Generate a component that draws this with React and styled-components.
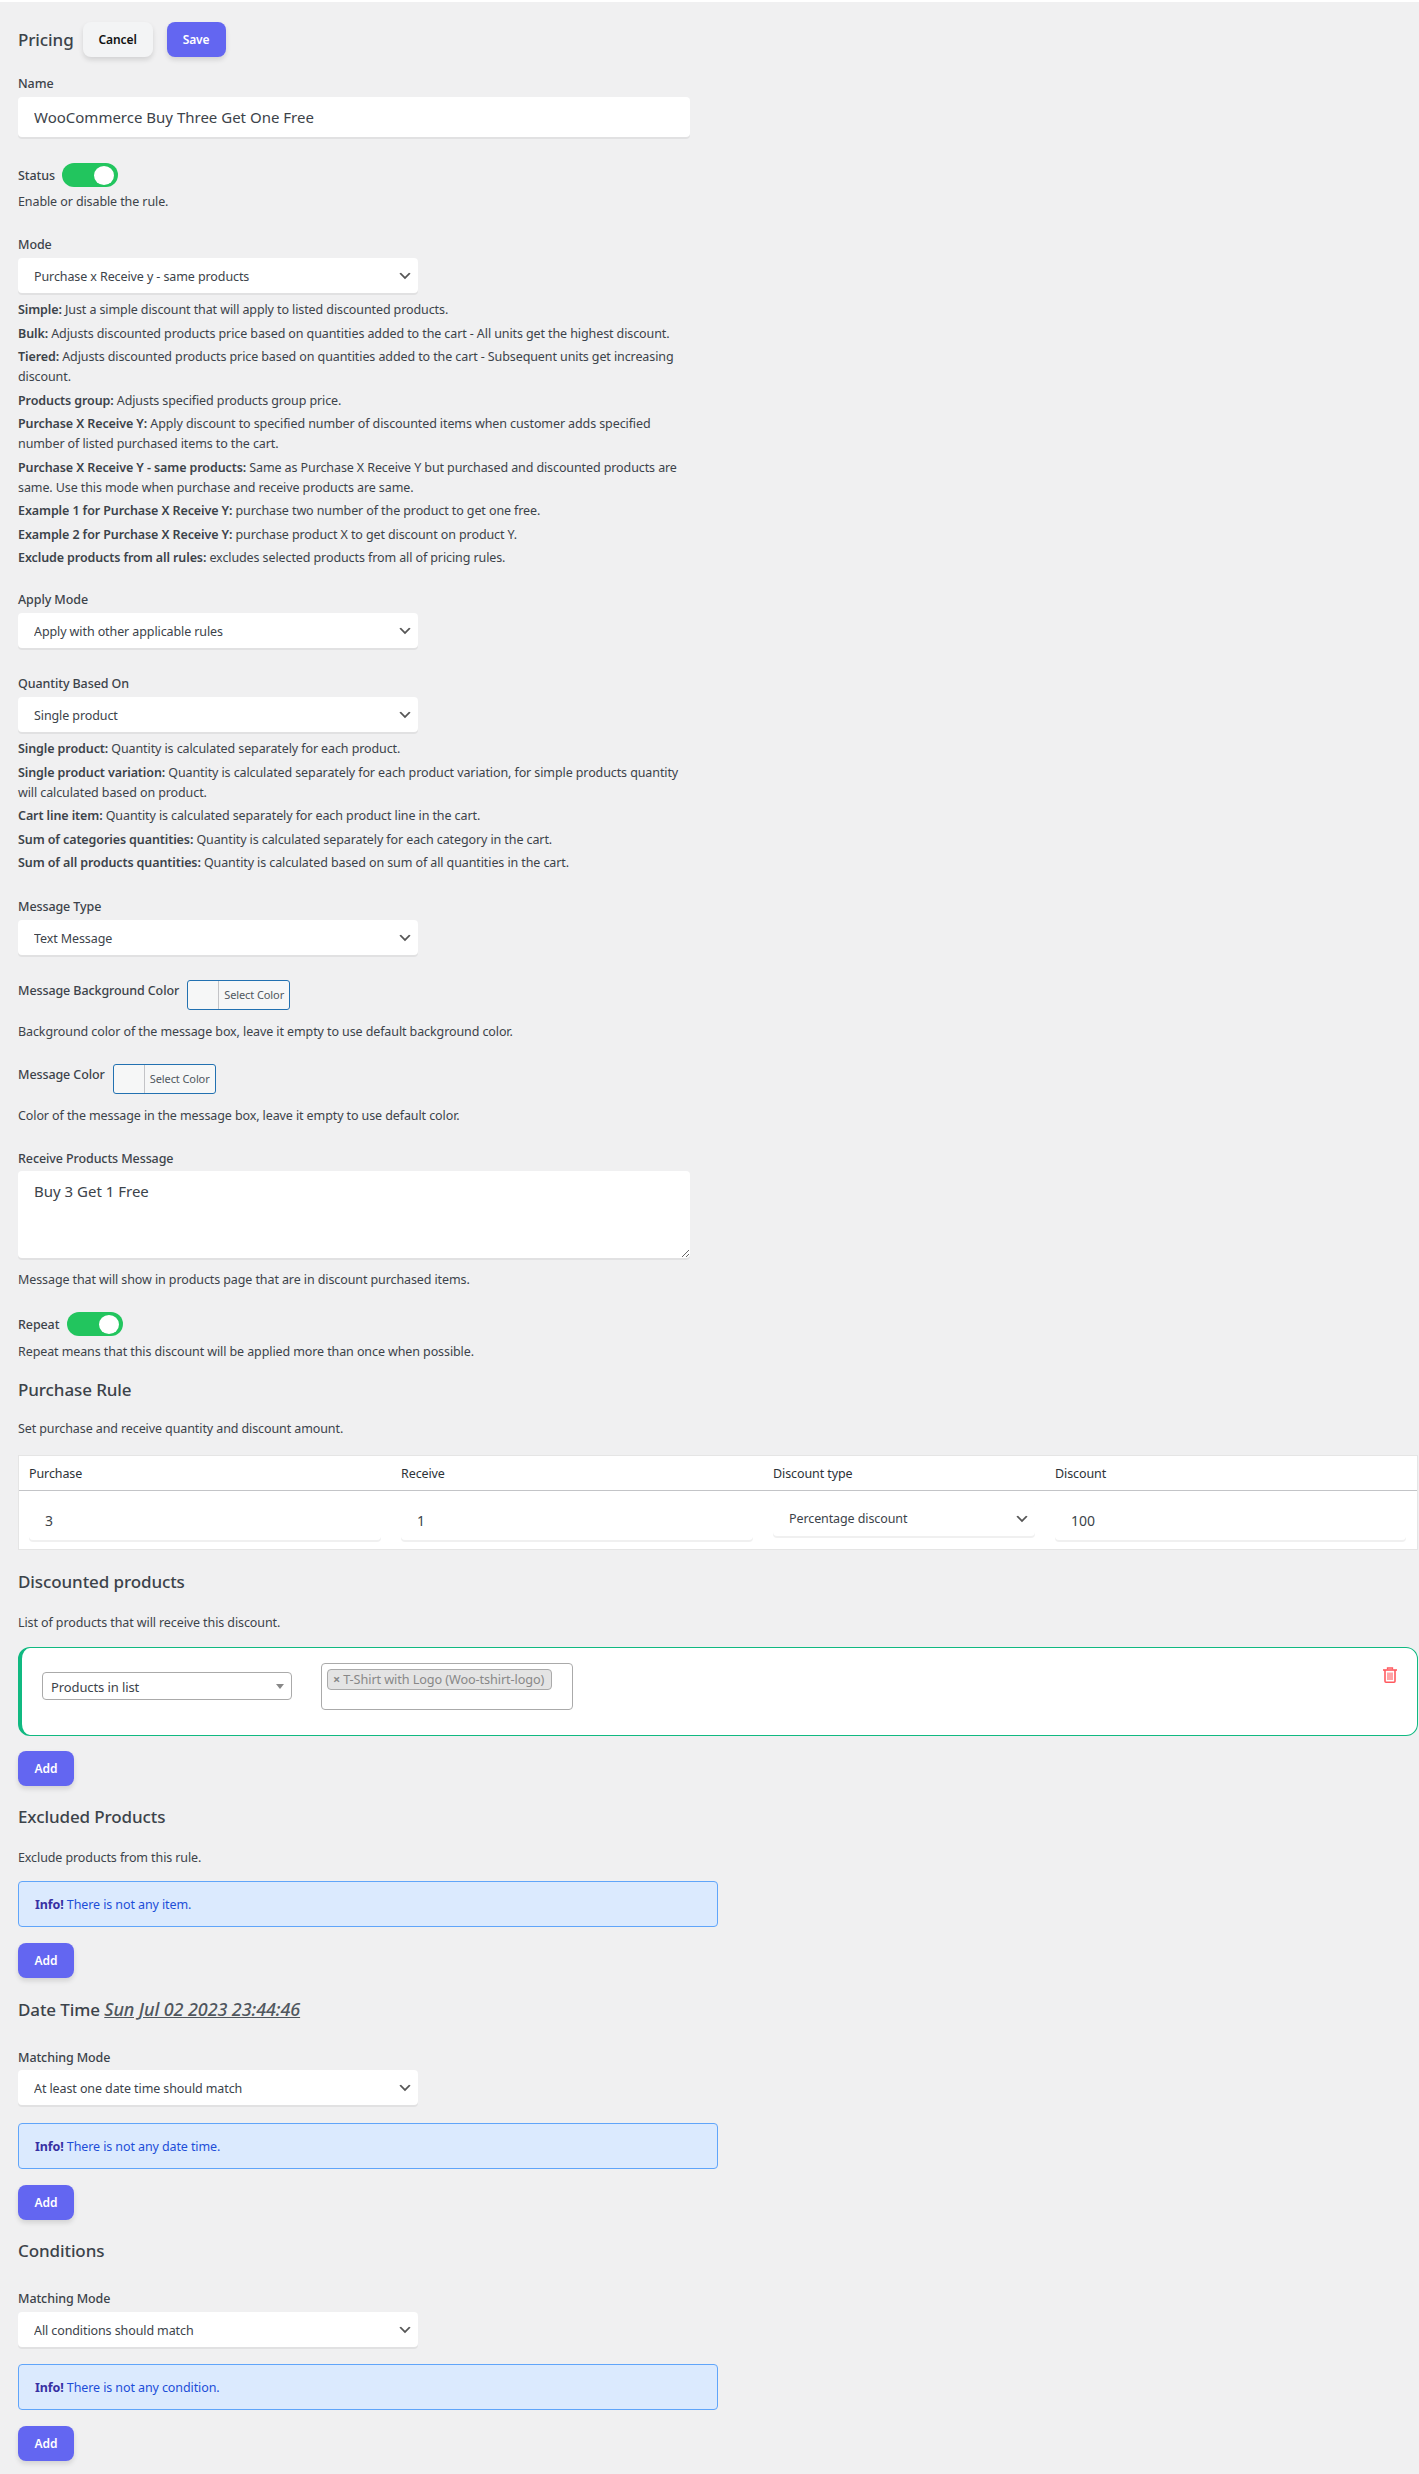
import React from 'react';
import styled, { createGlobalStyle } from 'styled-components';

const FONT = '"Noto Sans", "Open Sans", sans-serif';
const CHEVRON =
    "url(\"data:image/svg+xml,%3Csvg xmlns='http://www.w3.org/2000/svg' width='20' height='20'%3E%3Cpath d='M5 6l5 5 5-5 2 1-7 7-7-7 2-1z' fill='%23555'/%3E%3C/svg%3E\")";
const TRIANGLE =
    "url(\"data:image/svg+xml,%3Csvg xmlns='http://www.w3.org/2000/svg' width='8' height='5'%3E%3Cpath d='M0 0h8L4 5z' fill='%23888'/%3E%3C/svg%3E\")";

const modeHelp = [
    ['Simple:', 'Just a simple discount that will apply to listed discounted products.'],
    ['Bulk:', 'Adjusts discounted products price based on quantities added to the cart - All units get the highest discount.'],
    ['Tiered:', 'Adjusts discounted products price based on quantities added to the cart - Subsequent units get increasing discount.'],
    ['Products group:', 'Adjusts specified products group price.'],
    ['Purchase X Receive Y:', 'Apply discount to specified number of discounted items when customer adds specified number of listed purchased items to the cart.'],
    ['Purchase X Receive Y - same products:', 'Same as Purchase X Receive Y but purchased and discounted products are same. Use this mode when purchase and receive products are same.'],
    ['Example 1 for Purchase X Receive Y:', 'purchase two number of the product to get one free.'],
    ['Example 2 for Purchase X Receive Y:', 'purchase product X to get discount on product Y.'],
    ['Exclude products from all rules:', 'excludes selected products from all of pricing rules.'],
];

const quantityHelp = [
    ['Single product:', 'Quantity is calculated separately for each product.'],
    ['Single product variation:', 'Quantity is calculated separately for each product variation, for simple products quantity will calculated based on product.'],
    ['Cart line item:', 'Quantity is calculated separately for each product line in the cart.'],
    ['Sum of categories quantities:', 'Quantity is calculated separately for each category in the cart.'],
    ['Sum of all products quantities:', 'Quantity is calculated based on sum of all quantities in the cart.'],
];

const Select = ({ value }) => (
    <Dropdown defaultValue={value}>
        <option>{value}</option>
    </Dropdown>
);

const HelpList = ({ items }) => (
    <HelpBlock>
        {items.map(([title, text]) => (
            <HelpLine key={title}>
                <strong>{title}</strong> {text}
            </HelpLine>
        ))}
    </HelpBlock>
);

const Info = ({ top, children }) => (
    <InfoBox $top={top}>
        <strong>Info!</strong> {children}
    </InfoBox>
);

const TrashIcon = () => (
    <DeleteIcon viewBox="0 0 14 16" fill="none" stroke="currentColor">
        <path d="M4.5 2.5V1h5v1.5" strokeWidth="1.3" />
        <path d="M0 3h14" strokeWidth="1.6" />
        <path d="M2 3v11.2c0 .6.4 1 1 1h8c.6 0 1-.4 1-1V3" strokeWidth="1.6" />
        <path d="M5 5.5v7.5M7 5.5v7.5M9 5.5v7.5" strokeWidth="1.1" />
    </DeleteIcon>
);

export default function App() {
    return (
        <Page>
            <GlobalStyle />
            <Header>
                <PageTitle>Pricing</PageTitle>
                <CancelButton>Cancel</CancelButton>
                <PrimaryButton>Save</PrimaryButton>
            </Header>

            <Label $top={16}>Name</Label>
            <TextInput readOnly defaultValue="WooCommerce Buy Three Get One Free" />

            <ToggleRow $top={26} $gap={7}>
                <InlineLabel>Status</InlineLabel>
                <Toggle />
            </ToggleRow>
            <Help $top={4}>Enable or disable the rule.</Help>

            <Label $top={23}>Mode</Label>
            <Select value="Purchase x Receive y - same products" />
            <HelpList items={modeHelp} />

            <Label $top={22}>Apply Mode</Label>
            <Select value="Apply with other applicable rules" />

            <Label $top={25}>Quantity Based On</Label>
            <Select value="Single product" />
            <HelpList items={quantityHelp} />

            <Label $top={24}>Message Type</Label>
            <Select value="Text Message" />

            <ColorRow $top={25}>
                <InlineLabel>Message Background Color</InlineLabel>
                <ColorButton>
                    <Swatch />
                    <ColorText>Select Color</ColorText>
                </ColorButton>
            </ColorRow>
            <Help $top={11}>Background color of the message box, leave it empty to use default background color.</Help>

            <ColorRow $top={23}>
                <InlineLabel>Message Color</InlineLabel>
                <ColorButton>
                    <Swatch />
                    <ColorText>Select Color</ColorText>
                </ColorButton>
            </ColorRow>
            <Help $top={11}>Color of the message in the message box, leave it empty to use default color.</Help>

            <Label $top={23} $bottom={3}>Receive Products Message</Label>
            <TextArea readOnly defaultValue="Buy 3 Get 1 Free" />
            <Help $top={11}>Message that will show in products page that are in discount purchased items.</Help>

            <ToggleRow $top={23} $gap={8}>
                <InlineLabel>Repeat</InlineLabel>
                <Toggle />
            </ToggleRow>
            <Help $top={5}>Repeat means that this discount will be applied more than once when possible.</Help>

            <SectionTitle $top={17}>Purchase Rule</SectionTitle>
            <Help $top={16}>Set purchase and receive quantity and discount amount.</Help>

            <RuleTable>
                <RuleHead>
                    <span>Purchase</span>
                    <span>Receive</span>
                    <span>Discount type</span>
                    <span>Discount</span>
                </RuleHead>
                <RuleBody>
                    <CellInput readOnly defaultValue="3" />
                    <CellInput readOnly defaultValue="1" />
                    <CellSelect defaultValue="Percentage discount">
                        <option>Percentage discount</option>
                    </CellSelect>
                    <CellInput readOnly defaultValue="100" />
                </RuleBody>
            </RuleTable>

            <SectionTitle $top={20}>Discounted products</SectionTitle>
            <Help $top={18}>List of products that will receive this discount.</Help>

            <ProductCard>
                <PlainSelect defaultValue="Products in list">
                    <option>Products in list</option>
                </PlainSelect>
                <TagBox>
                    <Tag>
                        <TagRemove>×</TagRemove>T-Shirt with Logo (Woo-tshirt-logo)
                    </Tag>
                </TagBox>
                <TrashIcon />
            </ProductCard>
            <AddButton $top={15}>Add</AddButton>

            <SectionTitle $top={19}>Excluded Products</SectionTitle>
            <Help $top={18}>Exclude products from this rule.</Help>
            <Info top={14}>There is not any item.</Info>
            <AddButton $top={16}>Add</AddButton>

            <SectionTitle $top={19}>
                Date Time <DateStamp>Sun Jul 02 2023 23:44:46</DateStamp>
            </SectionTitle>
            <Label $top={26} $bottom={3}>Matching Mode</Label>
            <Select value="At least one date time should match" />
            <Info top={18}>There is not any date time.</Info>
            <AddButton $top={16}>Add</AddButton>

            <SectionTitle $top={19}>Conditions</SectionTitle>
            <Label $top={25}>Matching Mode</Label>
            <Select value="All conditions should match" />
            <Info top={17}>There is not any condition.</Info>
            <AddButton $top={16}>Add</AddButton>
        </Page>
    );
}

const GlobalStyle = createGlobalStyle`
    html, body {
        margin: 0;
        padding: 0;
        background: #f0f0f1;
    }
    * {
        box-sizing: border-box;
    }
`;

const Page = styled.div`
    width: 1419px;
    height: 2474px;
    overflow: hidden;
    padding: 0 0 0 18px;
    border-top: 2px solid #fff;
    background: #f0f0f1;
    color: #3c434a;
    font-family: ${FONT};
    font-size: 12.5px;
    line-height: 20px;
    letter-spacing: -0.1px;
`;

const Header = styled.div`
    display: flex;
    align-items: center;
    padding-top: 20px;
`;

const PageTitle = styled.h1`
    margin: 0 9px 0 0;
    font-size: 17px;
    font-weight: 500;
    line-height: 24px;
    color: #3c434a;
`;

const BaseButton = styled.button`
    display: block;
    height: 35px;
    padding: 0;
    border: 0;
    border-radius: 8px;
    font-family: ${FONT};
    font-size: 12px;
    font-weight: 600;
    letter-spacing: -0.1px;
    box-shadow: 0 3px 5px rgba(0, 0, 0, 0.12);
`;

const CancelButton = styled(BaseButton)`
    width: 70px;
    margin-right: 14px;
    background: #f3f4f5;
    color: #111;
`;

const PrimaryButton = styled(BaseButton)`
    width: 59px;
    background: #6366f1;
    color: #fff;
`;

const AddButton = styled(PrimaryButton)`
    width: 56px;
    margin-top: ${({ $top }) => $top}px;
`;

const Label = styled.label`
    display: block;
    height: 20px;
    padding-top: 1px;
    margin-top: ${({ $top }) => $top}px;
    margin-bottom: ${({ $bottom = 4 }) => $bottom}px;
    font-weight: 500;
    color: #3c434a;
`;

const InlineLabel = styled.label`
    padding-top: 1px;
    font-weight: 500;
`;

const ToggleRow = styled.div`
    display: flex;
    align-items: center;
    gap: ${({ $gap }) => $gap}px;
    height: 24px;
    margin-top: ${({ $top }) => $top}px;
`;

const Toggle = styled.span`
    display: flex;
    align-items: center;
    justify-content: flex-end;
    width: 56px;
    height: 24px;
    padding-right: 4px;
    border-radius: 12px;
    background: #22c55e;

    &::after {
        content: '';
        width: 20px;
        height: 19px;
        border-radius: 50%;
        background: #fff;
    }
`;

const Help = styled.p`
    height: 21px;
    margin: ${({ $top }) => $top}px 0 -1px;
    padding-top: 1px;
`;

const HelpBlock = styled.div`
    width: 672px;
    margin-top: 6px;
`;

const HelpLine = styled.p`
    margin: 0 0 2.5px;
    padding-top: 1px;

    &:last-child {
        margin-bottom: -1px;
    }

    strong {
        font-weight: 600;
    }
`;

const fieldShadow = 'box-shadow: 0 2px 0 rgba(0, 0, 0, 0.06);';

const TextInput = styled.input`
    display: block;
    width: 672px;
    height: 40px;
    padding: 0 16px;
    border: 0;
    border-radius: 4px;
    outline: 0;
    background: #fff;
    color: #3c434a;
    font-family: ${FONT};
    font-size: 15px;
    ${fieldShadow}
`;

const TextArea = styled.textarea`
    display: block;
    width: 672px;
    height: 87px;
    padding: 10px 16px;
    border: 0;
    border-radius: 4px;
    outline: 0;
    background: #fff;
    color: #3c434a;
    font-family: ${FONT};
    font-size: 15px;
    line-height: 20px;
    ${fieldShadow}
`;

const Dropdown = styled.select`
    display: block;
    width: 400px;
    height: 35px;
    padding: 1px 24px 0 16px;
    border: 0;
    border-radius: 4px;
    outline: 0;
    appearance: none;
    background: #fff ${CHEVRON} no-repeat right 5px top 55%;
    background-size: 16px 16px;
    color: #3c434a;
    font-family: ${FONT};
    font-size: 12.5px;
    letter-spacing: -0.1px;
    ${fieldShadow}
`;

const ColorRow = styled.div`
    display: flex;
    align-items: flex-start;
    gap: 8px;
    margin-top: ${({ $top }) => $top}px;
`;

const ColorButton = styled.div`
    display: flex;
    align-items: stretch;
    width: 103px;
    height: 30px;
    overflow: hidden;
    border: 1px solid #2271b1;
    border-radius: 3px;
    background: #f6f7f7;
`;

const Swatch = styled.span`
    width: 31px;
    border-right: 1px solid #c3c4c7;
`;

const ColorText = styled.span`
    flex: 1;
    font-size: 11px;
    line-height: 28px;
    text-align: center;
    letter-spacing: -0.1px;
    color: #50575e;
`;

const SectionTitle = styled.h2`
    height: 24px;
    margin: ${({ $top }) => $top}px 0 0;
    font-size: 17px;
    font-weight: 500;
    line-height: 24px;
    color: #3c434a;
`;

const DateStamp = styled.span`
    font-size: 18px;
    font-style: italic;
    text-decoration: underline;
    color: #50575e;
`;

const RuleTable = styled.div`
    width: 1400px;
    height: 95px;
    margin-top: 17px;
    border: 1px solid #e5e5e5;
    background: #fff;
`;

const RuleHead = styled.div`
    display: grid;
    grid-template-columns: 372px 372px 282px 1fr;
    align-items: center;
    height: 35px;
    padding: 1px 0 0 10px;
    border-bottom: 1px solid #c3c4c7;
    color: #2c3338;

    span {
        display: block;
    }
`;

const RuleBody = styled.div`
    display: grid;
    grid-template-columns: 352px 352px 262px 351px;
    column-gap: 20px;
    align-items: start;
    padding: 9px 0 0 10px;
`;

const CellInput = styled(TextInput)`
    width: 100%;
    font-size: 14px;
`;

const CellSelect = styled(Dropdown)`
    width: 100%;
    margin-top: 1px;
    padding-top: 0;
`;

const ProductCard = styled.div`
    position: relative;
    display: flex;
    align-items: flex-start;
    width: 1400px;
    height: 89px;
    margin-top: 15px;
    padding: 15px 0 0 20px;
    border: 1px solid #10b981;
    border-left-width: 4px;
    border-radius: 12px;
    background: #fff;
`;

const PlainSelect = styled.select`
    width: 250px;
    height: 28px;
    margin: 9px 29px 0 0;
    padding: 1px 18px 0 8px;
    border: 1px solid #aaa;
    border-radius: 4px;
    outline: 0;
    appearance: none;
    background: #fff ${TRIANGLE} no-repeat right 7px center;
    color: #3c434a;
    font-family: ${FONT};
    font-size: 13px;
    letter-spacing: -0.1px;
`;

const TagBox = styled.div`
    width: 252px;
    height: 47px;
    padding: 5px;
    border: 1px solid #aaa;
    border-radius: 4px;
`;

const Tag = styled.span`
    display: block;
    width: 225px;
    height: 21px;
    padding-left: 5px;
    overflow: hidden;
    border: 1px solid #aaa;
    border-radius: 4px;
    background: #e4e4e4;
    color: #888;
    font-size: 12.7px;
    line-height: 19px;
    white-space: nowrap;
`;

const TagRemove = styled.span`
    margin-right: 3px;
    font-weight: 700;
`;

const DeleteIcon = styled.svg`
    position: absolute;
    top: 19px;
    right: 20px;
    width: 14px;
    height: 16px;
    color: #ff5a5f;
`;

const InfoBox = styled.div`
    width: 700px;
    height: 46px;
    margin-top: ${({ $top }) => $top}px;
    padding: 13px 16px 0;
    border: 1px solid #60a5fa;
    border-radius: 4px;
    background: #dbeafe;
    color: #1d4ed8;

    strong {
        font-weight: 700;
        color: #3730a3;
    }
`;
